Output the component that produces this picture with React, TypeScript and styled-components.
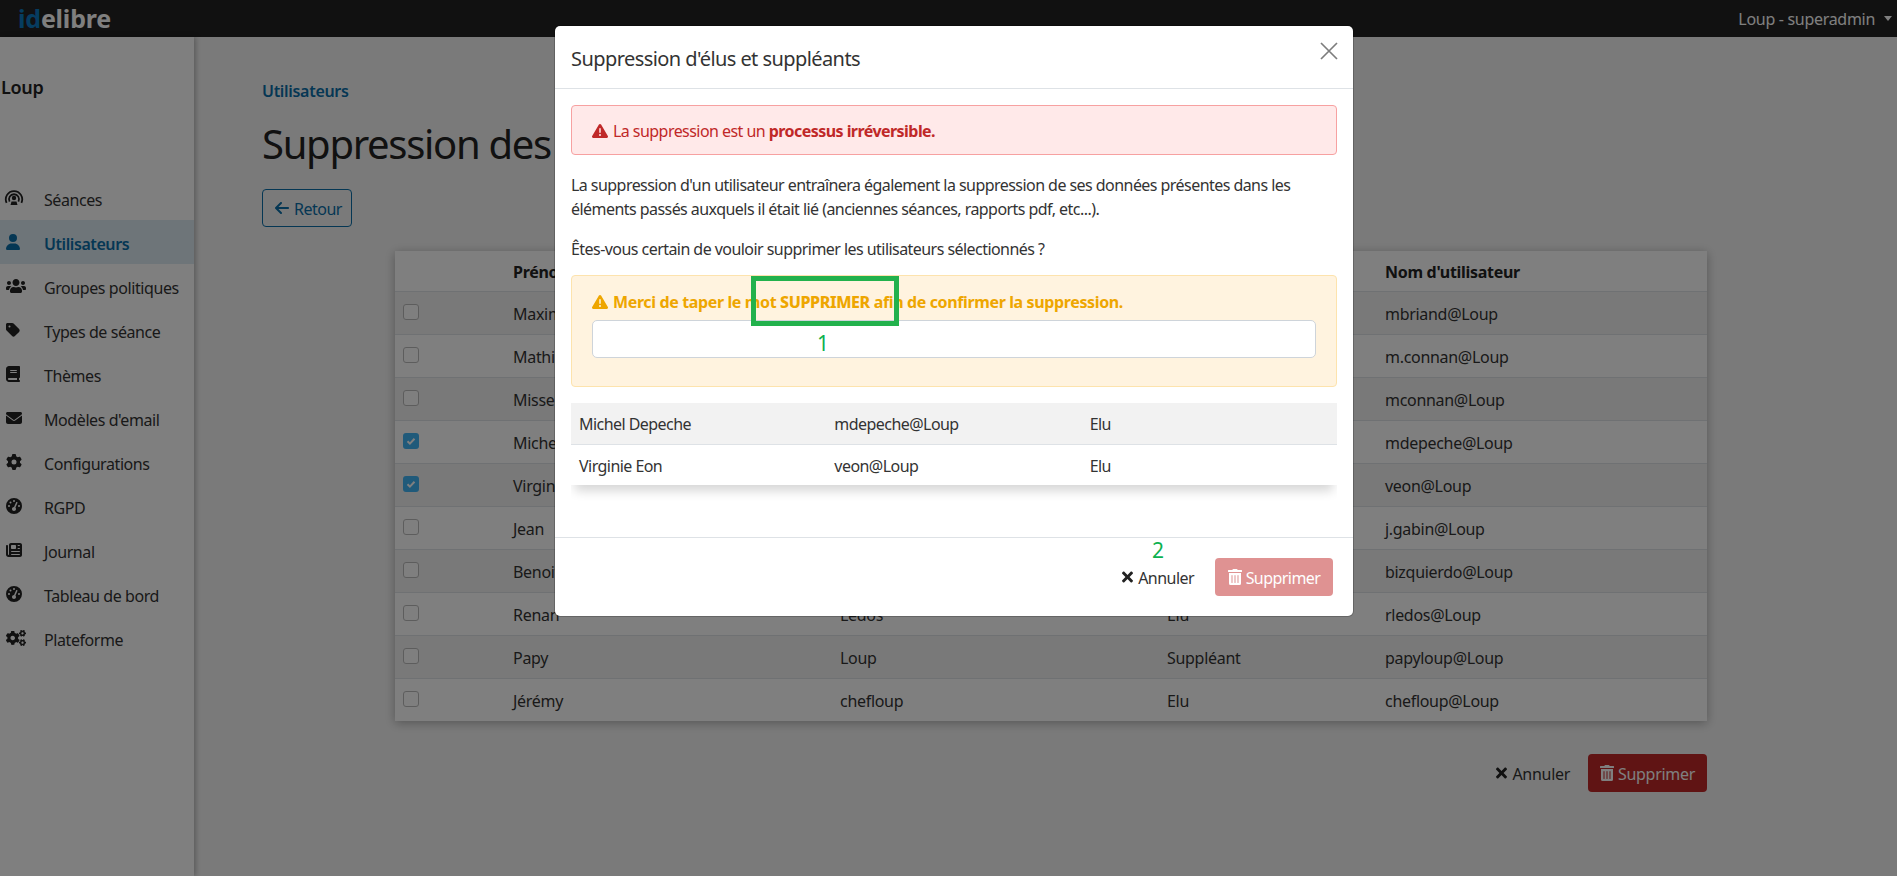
import React from "react";
import styled, { createGlobalStyle } from "styled-components";
import { FaCogs, FaTimes, FaTrashAlt, FaUsers } from "react-icons/fa";
import {
  FaArrowLeft,
  FaBook,
  FaEnvelope,
  FaGaugeHigh,
  FaGear,
  FaNewspaper,
  FaTag,
  FaTriangleExclamation,
  FaUser,
} from "react-icons/fa6";

const SessionIcon = () => (
  <svg viewBox="0 0 20 16">
    <g fill="none" stroke="currentColor" strokeWidth="1.8">
      <path d="M2.6 12.8A8.2 8.2 0 1 1 17.4 12.8" />
      <path d="M5.6 11.6A5 5 0 1 1 14.4 11.6" />
    </g>
    <circle cx="10" cy="8" r="2.2" fill="currentColor" />
    <path d="M7.5 11.5h5l1 3.5h-7z" fill="currentColor" />
  </svg>
);

const NAV = [
  { label: "Séances", icon: <SessionIcon />, width: 20, shift: -2 },
  { label: "Utilisateurs", icon: <FaUser />, width: 14, active: true },
  { label: "Groupes politiques", icon: <FaUsers />, width: 20 },
  { label: "Types de séance", icon: <FaTag />, width: 14 },
  { label: "Thèmes", icon: <FaBook />, width: 14 },
  { label: "Modèles d'email", icon: <FaEnvelope />, width: 16 },
  { label: "Configurations", icon: <FaGear />, width: 16 },
  { label: "RGPD", icon: <FaGaugeHigh />, width: 16 },
  { label: "Journal", icon: <FaNewspaper />, width: 16 },
  { label: "Tableau de bord", icon: <FaGaugeHigh />, width: 16 },
  { label: "Plateforme", icon: <FaCogs />, width: 20 },
];

const USERS = [
  ["Maxime", "Briand", "Elu", "mbriand@Loup"],
  ["Mathieu", "Connan", "Elu", "m.connan@Loup"],
  ["Missel", "Connan", "Elu", "mconnan@Loup"],
  ["Michel", "Depeche", "Elu", "mdepeche@Loup", true],
  ["Virginie", "Eon", "Elu", "veon@Loup", true],
  ["Jean", "Gabin", "Elu", "j.gabin@Loup"],
  ["Benoit", "Izquierdo", "Elu", "bizquierdo@Loup"],
  ["Renan", "Ledos", "Elu", "rledos@Loup"],
  ["Papy", "Loup", "Suppléant", "papyloup@Loup"],
  ["Jérémy", "chefloup", "Elu", "chefloup@Loup"],
] as const;

const SELECTED = [
  ["Michel Depeche", "mdepeche@Loup", "Elu"],
  ["Virginie Eon", "veon@Loup", "Elu"],
];

const App = () => {
  return (
    <>
      <GlobalStyle />
      <Shell>
        <TopBar>
          <Logo>
            <span>id</span>elibre
          </Logo>
          <UserMenu>
            Loup - superadmin
            <Caret />
          </UserMenu>
        </TopBar>
        <Body>
          <Sidebar>
            <Structure>Loup</Structure>
            <NavList>
              {NAV.map((item) => (
                <NavItem key={item.label} $active={item.active}>
                  <NavIcon $active={item.active} $width={item.width} $shift={item.shift ?? 0}>
                    {item.icon}
                  </NavIcon>
                  {item.label}
                </NavItem>
              ))}
            </NavList>
          </Sidebar>
          <Main>
            <Breadcrumb>Utilisateurs</Breadcrumb>
            <PageTitle>Suppression des utilisateurs</PageTitle>
            <BackButton>
              <FaArrowLeft />
              Retour
            </BackButton>
            <UsersTable>
              <colgroup>
                <col width={110} />
                <col width={327} />
                <col width={327} />
                <col width={218} />
                <col width={330} />
              </colgroup>
              <thead>
                <tr>
                  <th />
                  <th>Prénom</th>
                  <th>Nom</th>
                  <th>Profil</th>
                  <th>Nom d'utilisateur</th>
                </tr>
              </thead>
              <tbody>
                {USERS.map((user) => (
                  <tr key={user[3]}>
                    <td>
                      <CheckBox $checked={Boolean(user[4])}>
                        {user[4] && (
                          <svg viewBox="0 0 16 16" width="16" height="16">
                            <path
                              d="M4.5 8.3l2.4 2.3 4.6-4.8"
                              fill="none"
                              stroke="#fff"
                              strokeWidth="2"
                            />
                          </svg>
                        )}
                      </CheckBox>
                    </td>
                    <td>{user[0]}</td>
                    <td>{user[1]}</td>
                    <td>{user[2]}</td>
                    <td>{user[3]}</td>
                  </tr>
                ))}
              </tbody>
            </UsersTable>
            <PageActions>
              <CancelButton>
                <FaTimes />
                Annuler
              </CancelButton>
              <DeleteButton>
                <FaTrashAlt />
                Supprimer
              </DeleteButton>
            </PageActions>
          </Main>
        </Body>
        <Backdrop />
        <Modal>
          <ModalHeader>
            <ModalTitle>Suppression d'élus et suppléants</ModalTitle>
            <CloseButton aria-label="Fermer">
              <svg viewBox="0 0 18 18" width="18" height="18">
                <path d="M1 1l16 16M17 1L1 17" stroke="#7d7d7d" strokeWidth="1.7" fill="none" />
              </svg>
            </CloseButton>
          </ModalHeader>
          <ModalBody>
            <DangerAlert>
              <FaTriangleExclamation />
              <span>
                La suppression est un <b>processus irréversible.</b>
              </span>
            </DangerAlert>
            <Paragraph>
              La suppression d'un utilisateur entraînera également la suppression de ses données
              présentes dans les éléments passés auxquels il était lié (anciennes séances, rapports
              pdf, etc...).
            </Paragraph>
            <Paragraph>Êtes-vous certain de vouloir supprimer les utilisateurs sélectionnés ?</Paragraph>
            <WarningBox>
              <WarningText>
                <FaTriangleExclamation />
                <span>
                  Merci de taper le mot <strong>SUPPRIMER</strong> afin de confirmer la suppression.
                </span>
              </WarningText>
              <ConfirmInput />
              <Highlight />
              <StepNumber $left={262} $top={242}>
                1
              </StepNumber>
            </WarningBox>
            <SelectedTable>
              <tbody>
                {SELECTED.map((row) => (
                  <tr key={row[1]}>
                    <td>{row[0]}</td>
                    <td>{row[1]}</td>
                    <td>{row[2]}</td>
                  </tr>
                ))}
              </tbody>
            </SelectedTable>
          </ModalBody>
          <ModalFooter>
            <StepNumber $left={597} $top={512}>
              2
            </StepNumber>
            <CancelButton>
              <FaTimes />
              Annuler
            </CancelButton>
            <DeleteButton $disabled>
              <FaTrashAlt />
              Supprimer
            </DeleteButton>
          </ModalFooter>
        </Modal>
      </Shell>
    </>
  );
};

export default App;

const GlobalStyle = createGlobalStyle`
  * {
    box-sizing: border-box;
  }
  html, body {
    margin: 0;
    height: 100%;
    overflow: hidden;
  }
  body {
    font-family: "Noto Sans", "Open Sans", sans-serif;
    font-size: 16px;
    line-height: 24px;
    letter-spacing: -0.3px;
    color: #333;
  }
  svg {
    flex-shrink: 0;
  }
`;

const Shell = styled.div`
  position: relative;
  display: flex;
  flex-direction: column;
  width: 1897px;
  height: 876px;
  overflow: hidden;
  background: #f5f5f5;
`;

const TopBar = styled.header`
  display: flex;
  align-items: center;
  justify-content: space-between;
  flex: 0 0 37px;
  padding: 0 5px 0 18px;
  background: #222;
`;

const Logo = styled.div`
  font-size: 25px;
  font-weight: 700;
  letter-spacing: -0.2px;
  color: #fff;
  line-height: 37px;

  span {
    color: #0d7ac0;
  }
`;

const UserMenu = styled.div`
  display: flex;
  align-items: center;
  gap: 9px;
  color: #fff;
`;

const Caret = styled.span`
  border-top: 5px solid #fff;
  border-left: 4px solid transparent;
  border-right: 4px solid transparent;
`;

const Body = styled.div`
  display: flex;
  flex: 1;
  min-height: 0;
`;

const Sidebar = styled.aside`
  flex: 0 0 194px;
  background: #fff;
  box-shadow: 2px 0 5px rgba(0, 0, 0, 0.25);
`;

const Structure = styled.div`
  height: 139px;
  padding: 38px 0 0 1px;
  font-size: 18px;
  font-weight: 600;
  color: #222;
`;

const NavList = styled.nav`
  display: flex;
  flex-direction: column;
`;

const NavItem = styled.a<{ $active?: boolean }>`
  display: flex;
  align-items: center;
  height: 44px;
  padding: 3px 0 0 6px;
  letter-spacing: -0.42px;
  color: ${(p) => (p.$active ? "#0a6ea8" : "#333")};
  font-weight: ${(p) => (p.$active ? 600 : 400)};
  background: ${(p) => (p.$active ? "#dcebf2" : "transparent")};
`;

const NavIcon = styled.span<{ $active?: boolean; $width: number; $shift: number }>`
  display: flex;
  flex: 0 0 38px;
  margin-top: -3px;
  color: ${(p) => (p.$active ? "#0a6ea8" : "#222")};

  svg {
    width: ${(p) => p.$width}px;
    height: 16px;
    margin-left: ${(p) => p.$shift}px;
  }
`;

const Main = styled.main`
  flex: 1;
  min-width: 0;
  padding: 42px 0 0 68px;
`;

const Breadcrumb = styled.div`
  font-weight: 600;
  color: #0a6ea8;
`;

const PageTitle = styled.h1`
  margin: 17px 0 21px;
  font-size: 40px;
  font-weight: 400;
  line-height: 48px;
  letter-spacing: -1.3px;
  color: #222;
  white-space: nowrap;
`;

const BackButton = styled.button`
  display: inline-flex;
  align-items: center;
  gap: 5px;
  width: 90px;
  height: 38px;
  padding: 2px 12px 0;
  font: inherit;
  letter-spacing: -0.5px;
  color: #0a6ea8;
  background: transparent;
  border: 1px solid #0a6ea8;
  border-radius: 4px;

  svg {
    width: 14px;
    height: 16px;
    margin-top: -2px;
  }
`;

const UsersTable = styled.table`
  display: table;
  width: 1312px;
  margin: 24px 0 33px 133px;
  table-layout: fixed;
  border-collapse: collapse;
  background: #fff;
  box-shadow: 0 2px 10px rgba(0, 0, 0, 0.3);

  th {
    height: 40px;
    padding: 2px 8px 0;
    text-align: left;
    font-weight: 700;
    color: #222;
  }
  td {
    height: 43px;
    padding: 2px 8px 0;
    border-top: 1px solid #dee2e6;
    color: #333;
  }
  tbody tr:nth-child(odd) {
    background: #f2f2f2;
  }
`;

const CheckBox = styled.span<{ $checked: boolean }>`
  display: block;
  width: 16px;
  height: 16px;
  margin-top: -3px;
  border-radius: 3px;
  border: 1px solid ${(p) => (p.$checked ? "transparent" : "#bbb")};
  background: ${(p) => (p.$checked ? "#41b4f5" : "#fff")};

  svg {
    display: block;
    margin: -1px;
  }
`;

const PageActions = styled.div`
  display: flex;
  align-items: center;
  justify-content: flex-end;
  gap: 18px;
  width: 1445px;
`;

const CancelButton = styled.button`
  display: inline-flex;
  align-items: center;
  gap: 5px;
  padding: 2px 0 0;
  font: inherit;
  letter-spacing: inherit;
  color: #333;
  background: none;
  border: 0;

  svg {
    width: 11px;
    height: 16px;
    margin-top: -2px;
    color: #222;
  }
`;

const DeleteButton = styled.button<{ $disabled?: boolean }>`
  display: inline-flex;
  align-items: center;
  justify-content: center;
  gap: 4px;
  width: ${(p) => (p.$disabled ? "118px" : "119px")};
  height: 38px;
  padding: 2px 0 0;
  font: inherit;
  letter-spacing: inherit;
  color: #fff;
  background: #c02828;
  border: 0;
  border-radius: 4px;
  opacity: ${(p) => (p.$disabled ? 0.5 : 1)};

  svg {
    width: 14px;
    height: 16px;
    margin-top: -2px;
  }
`;

const Backdrop = styled.div`
  position: absolute;
  inset: 0;
  background: rgba(0, 0, 0, 0.5);
`;

const Modal = styled.div`
  position: absolute;
  left: 555px;
  top: 26px;
  width: 798px;
  height: 590px;
  display: flex;
  flex-direction: column;
  background: #fff;
  border-radius: 5px;
  box-shadow: 0 0 0 1px rgba(0, 0, 0, 0.2);
  letter-spacing: -0.55px;
`;

const ModalHeader = styled.div`
  position: relative;
  display: flex;
  align-items: center;
  flex: 0 0 63px;
  padding: 3px 16px 0;
  border-bottom: 1px solid #dee2e6;
`;

const ModalTitle = styled.h5`
  margin: 0;
  font-size: 20px;
  font-weight: 400;
  letter-spacing: -0.57px;
  color: #333;
`;

const CloseButton = styled.button`
  position: absolute;
  top: 16px;
  right: 15px;
  padding: 0;
  background: none;
  border: 0;
  line-height: 0;
`;

const ModalBody = styled.div`
  position: relative;
  flex: 1;
  padding: 16px;
`;

const DangerAlert = styled.div`
  display: flex;
  align-items: center;
  gap: 5px;
  height: 50px;
  margin-bottom: 18px;
  padding: 2px 20px 0;
  color: #c02828;
  background: #ffe9e9;
  border: 1px solid #f7a1a1;
  border-radius: 4px;

  svg {
    width: 16px;
    height: 16px;
  }
`;

const Paragraph = styled.p`
  margin: 0 0 16px;
  color: #333;
`;

const WarningBox = styled.div`
  height: 112px;
  margin: -2px 0 16px;
  padding: 14px 20px;
  background: #fff3df;
  border: 1px solid #fde3ad;
  border-radius: 4px;
`;

const WarningText = styled.div`
  display: flex;
  align-items: center;
  gap: 5px;
  font-weight: 700;
  letter-spacing: -0.37px;
  color: #eea600;

  strong {
    font-weight: 800;
  }
  svg {
    width: 16px;
    height: 16px;
  }
`;

const ConfirmInput = styled.input`
  display: block;
  width: 100%;
  height: 38px;
  margin-top: 6px;
  background: #fff;
  border: 1px solid #ced4da;
  border-radius: 5px;
`;

const Highlight = styled.div`
  position: absolute;
  left: 196px;
  top: 187px;
  width: 148px;
  height: 50px;
  border: 5px solid #22b14c;
`;

const StepNumber = styled.span<{ $left: number; $top: number }>`
  position: absolute;
  left: ${(p) => p.$left}px;
  top: ${(p) => p.$top}px;
  font-size: 21px;
  line-height: 24px;
  color: #0cb14f;
`;

const SelectedTable = styled.table`
  width: 100%;
  table-layout: fixed;
  border-collapse: collapse;
  box-shadow: 0 10px 10px -4px rgba(0, 0, 0, 0.16);
  clip-path: inset(0 0 -30px 0);

  td {
    height: 41px;
    padding: 2px 8px 0;
    color: #333;
  }
  tr:first-child {
    background: #f2f2f2;
  }
  tr:first-child td {
    border-bottom: 1px solid #dee2e6;
  }
`;

const ModalFooter = styled.div`
  display: flex;
  align-items: center;
  justify-content: flex-end;
  gap: 21px;
  flex: 0 0 79px;
  padding: 0 20px 0 0;
  border-top: 1px solid #dee2e6;
`;
